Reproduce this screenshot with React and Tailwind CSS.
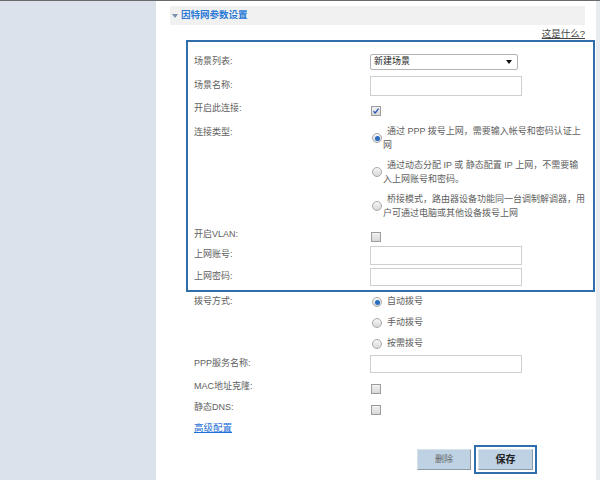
import React from "react";

const Label = ({ children }) => (
  <div className="w-[176px] shrink-0 text-[#606060]">{children}</div>
);

const Radio = ({ checked }) => (
  <span className="flex h-[10px] w-[10px] items-center justify-center rounded-full border border-[#a9a9a9] bg-gradient-to-b from-[#f6f6f6] to-[#d9d9d9]">
    {checked && <span className="h-[5px] w-[5px] rounded-full bg-[#2a6cc0]" />}
  </span>
);

const Checkbox = ({ checked }) => (
  <span className="ml-[1px] mt-[3px] flex h-[10px] w-[10px] items-center justify-center border border-[#9d9d9d] bg-gradient-to-b from-[#f2f2f2] to-[#d8d8d8]">
    {checked && (
      <svg width="8" height="8" viewBox="0 0 8 8">
        <path d="M1.5 4.2 L3.2 6 L6.6 1.6" fill="none" stroke="#2458b8" strokeWidth="1.3" />
      </svg>
    )}
  </span>
);

const TextInput = ({ h = "h-[20px]" }) => (
  <div className={`w-[152px] ${h} border border-[#cfcfcf] bg-white`} />
);

const Row = ({ label, className = "", children }) => (
  <div className={`flex items-center ${className}`}>
    <Label>{label}</Label>
    <div className="flex items-center">{children}</div>
  </div>
);

const ConnOption = ({ checked, lines }) => (
  <div className="flex items-center">
    <div className="flex w-[13px] shrink-0 justify-start pl-[2px]">
      <Radio checked={checked} />
    </div>
    <div className="leading-[14px] text-[#606060]">
      <div className="whitespace-nowrap pl-[4px]">{lines[0]}</div>
      <div className="whitespace-nowrap">{lines[1]}</div>
    </div>
  </div>
);

const DialOption = ({ checked, text, className = "" }) => (
  <div className={`flex items-center ${className}`}>
    <div className="flex w-[17px] shrink-0 pl-[2px]">
      <Radio checked={checked} />
    </div>
    <span className="text-[#606060]">{text}</span>
  </div>
);

const App = () => {
  return (
    <div className="flex h-[480px] w-[600px] overflow-hidden border-t border-[#6a6a6a] font-['Liberation_Sans','Noto_Sans_CJK_SC',sans-serif] text-[9px]">
      <div className="w-[156px] shrink-0 bg-[#dbe2ec]" />
      <div className="w-[440px] shrink-0 bg-white">
        {/* section header */}
        <div className="ml-[14px] mr-[11px] mt-[5px] flex h-[19px] items-center bg-[#f1f1f1] pl-[2px]">
          <svg width="6" height="4" viewBox="0 0 6 4" className="mr-[3px]">
            <path d="M0 0 H6 L3 4 Z" fill="#7a8fa8" />
          </svg>
          <span className="text-[9.5px] font-bold text-[#2a7ad6]">因特网参数设置</span>
        </div>
        <div className="mr-[11px] mt-[2px] flex h-[12px] justify-end">
          <span className="text-[9.5px] text-[#444] underline">这是什么?</span>
        </div>

        {/* highlighted box */}
        <div className="ml-[30px] mr-[1px] mt-[1px] border-2 border-[#2f6eaa] pb-[2px] pl-[6px] pt-[8px]">
          <Row label="场景列表:" className="h-[24px]">
            <div className="flex h-[16px] w-[148px] items-center justify-between rounded-[2px] border border-[#b4b4b4] bg-white pl-[3px] pr-[5px] text-[#222]">
              <span>新建场景</span>
              <svg width="6" height="4" viewBox="0 0 6 4">
                <path d="M0 0 H6 L3 4 Z" fill="#111" />
              </svg>
            </div>
          </Row>
          <Row label="场景名称:" className="h-[24px]">
            <TextInput />
          </Row>
          <Row label="开启此连接:" className="h-[22px]">
            <Checkbox checked />
          </Row>
          <div className="mt-[4px] flex">
            <Label>
              <div className="pt-[1px] leading-[14px]">连接类型:</div>
            </Label>
            <div className="flex flex-col gap-[6px]">
              <ConnOption
                checked
                lines={["通过 PPP 拨号上网，需要输入帐号和密码认证上", "网"]}
              />
              <ConnOption
                lines={["通过动态分配 IP 或 静态配置 IP 上网，不需要输", "入上网账号和密码。"]}
              />
              <ConnOption
                lines={["桥接模式，路由器设备功能同一台调制解调器，用", "户可通过电脑或其他设备拨号上网"]}
              />
            </div>
          </div>
          <Row label="开启VLAN:" className="mt-[6px] h-[18px]">
            <Checkbox />
          </Row>
          <Row label="上网账号:" className="h-[22px]">
            <TextInput h="h-[19px]" />
          </Row>
          <Row label="上网密码:" className="h-[22px]">
            <TextInput h="h-[18px]" />
          </Row>
        </div>

        {/* outside rows */}
        <div className="ml-[30px] pl-[8px]">
          <div className="flex">
            <Label>
              <div className="flex h-[20px] items-center">拨号方式:</div>
            </Label>
            <div className="flex flex-col">
              <DialOption checked text="自动拨号" className="h-[20px]" />
              <DialOption text="手动拨号" className="h-[22px]" />
              <DialOption text="按需拨号" className="h-[20px]" />
            </div>
          </div>
          <Row label="PPP服务名称:" className="h-[20px]">
            <TextInput h="h-[18px]" />
          </Row>
          <Row label="MAC地址克隆:" className="mt-[3px] h-[20px]">
            <Checkbox />
          </Row>
          <Row label="静态DNS:" className="mt-[1px] h-[20px]">
            <Checkbox />
          </Row>
          <div className="mt-[2px] flex h-[16px] items-center">
            <span className="text-[9.5px] text-[#1f6fd8] underline">高级配置</span>
          </div>
          <div className="mt-[9px] flex items-center pl-[223px]">
            <button className="h-[21px] w-[54px] border border-[#d8e2ec] border-b-[#8e9aa6] border-r-[#8e9aa6] bg-[#bed2e4] text-[9px] text-[#666]">
              删除
            </button>
            <div className="ml-[3px] border-2 border-[#2f6eaa] p-[2px]">
              <button className="h-[21px] w-[55px] border border-[#d8e2ec] border-b-[#8e9aa6] border-r-[#8e9aa6] bg-[#bed2e4] text-[10px] font-bold text-[#222]">
                保存
              </button>
            </div>
          </div>
        </div>
      </div>
      <div className="flex-1 bg-[#e8ebf0]" />
    </div>
  );
};

export default App;
